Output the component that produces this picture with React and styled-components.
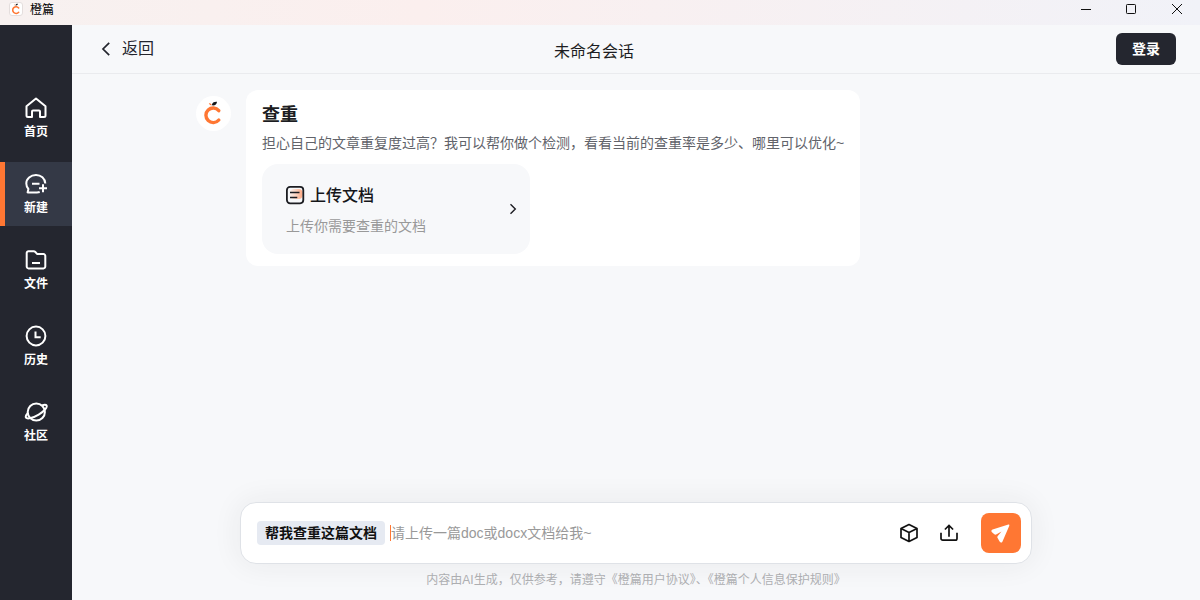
import React, { useState } from "react";
import styled, { createGlobalStyle } from "styled-components";

const menus = [
  { key: "home", label: "首页", icon: <HomeIcon /> },
  { key: "new", label: "新建", icon: <NewChatIcon /> },
  { key: "file", label: "文件", icon: <FolderIcon /> },
  { key: "history", label: "历史", icon: <HistoryIcon /> },
  { key: "community", label: "社区", icon: <PlanetIcon /> },
];

const App = () => {
  const [active, setActive] = useState("new");

  return (
    <>
      <GlobalStyle />
      <Window>
        <TitleBar>
          <AppIcon>
            <Logo size={12} />
          </AppIcon>
          <AppName>橙篇</AppName>
          <WindowButtons>
            <svg width="12" height="12" viewBox="0 0 12 12">
              <path d="M1 6.5h10" stroke="#111" />
            </svg>
            <svg width="12" height="12" viewBox="0 0 12 12" fill="none">
              <rect x="1.5" y="1.5" width="9" height="9" rx="0.8" stroke="#111" />
            </svg>
            <svg width="12" height="12" viewBox="0 0 12 12">
              <path d="M1 1l10 10M11 1L1 11" stroke="#111" />
            </svg>
          </WindowButtons>
        </TitleBar>

        <Body>
          <SideBar>
            {menus.map((m) => (
              <MenuItem key={m.key} $active={m.key === active} onClick={() => setActive(m.key)}>
                {m.icon}
                <MenuLabel>{m.label}</MenuLabel>
              </MenuItem>
            ))}
          </SideBar>

          <Main>
            <Header>
              <BackButton>
                <svg width="12" height="16" viewBox="0 0 12 16" fill="none">
                  <path d="M9.2 1.8L3 8l6.2 6.2" stroke="#23252d" strokeWidth="1.7" />
                </svg>
                返回
              </BackButton>
              <Title>未命名会话</Title>
              <LoginButton>登录</LoginButton>
            </Header>

            <Chat>
              <Avatar>
                <Logo size={26} />
              </Avatar>
              <Message>
                <MessageTitle>查重</MessageTitle>
                <MessageText>
                  担心自己的文章重复度过高？我可以帮你做个检测，看看当前的查重率是多少、哪里可以优化~
                </MessageText>
                <UploadCard>
                  <div>
                    <UploadTitle>
                      <DocIcon />
                      上传文档
                    </UploadTitle>
                    <UploadText>上传你需要查重的文档</UploadText>
                  </div>
                  <svg width="8" height="12" viewBox="0 0 8 12" fill="none">
                    <path d="M1.5 1.2L6.3 6l-4.8 4.8" stroke="#1c1d22" strokeWidth="1.4" />
                  </svg>
                </UploadCard>
              </Message>
            </Chat>

            <InputBox>
              <Tag>帮我查重这篇文档</Tag>
              <Caret />
              <Placeholder>请上传一篇doc或docx文档给我~</Placeholder>
              <Tools>
                <CubeIcon />
                <ShareIcon />
              </Tools>
              <SendButton>
                <svg width="24" height="24" viewBox="0 0 24 24">
                  <path
                    d="M19.4 3.6L3.600 8.600c-1.400.5-1.600 1.800-.6 2.700l2.300 1.900c.7.6 1.500.6 2.300.1l4.900-2.900-3.700 4.500c-.6.7-.6 1.300-.2 2l2 3.700c.8 1.400 2.300 1.300 2.900-.2l6.700-15.500c.4-.9 0-1.500-.8-1.300z"
                    fill="#fff"
                  />
                </svg>
              </SendButton>
            </InputBox>
            <Notice>内容由AI生成，仅供参考，请遵守《橙篇用户协议》、《橙篇个人信息保护规则》</Notice>
          </Main>
        </Body>
      </Window>
    </>
  );
};

export default App;

function Logo({ size }) {
  return (
    <svg width={size} height={size} viewBox="0 0 26 26" fill="none">
      <path d="M18.8 10.600A7.300 7.300 0 1 0 18.8 20" stroke="#ff7733" strokeWidth="3.400" strokeLinecap="round" />
      <path d="M11.800 5.300c.2-2.600 2.400-3.700 5.200-3.500-.2 2.600-2.200 4.100-5.200 3.500z" fill="#15161a" />
      <path d="M8.800 3.300c1.500-.4 2.500.5 3 2-1.500.1-2.500-.6-3-2z" fill="#ff7733" />
    </svg>
  );
}

function HomeIcon() {
  return (
    <svg width="24" height="24" viewBox="0 0 24 24" fill="none" stroke="#fff" strokeWidth="2" strokeLinejoin="round">
      <path d="M2.500 10.300L12 2.500l9.500 7.800v9.200a1.500 1.500 0 0 1-1.500 1.500h-4v-5.500a1 1 0 0 0-1-1H9a1 1 0 0 0-1 1V21H4a1.500 1.500 0 0 1-1.500-1.500z" />
    </svg>
  );
}

function NewChatIcon() {
  return (
    <svg width="24" height="24" viewBox="0 0 24 24" fill="none" stroke="#fff" strokeWidth="2">
      <path d="M21.300 11.500C21 6.300 17 3 12 3 6.600 3 2.300 6.700 2.300 11.500c0 2.300 1 4.200 2.100 5.500L3.600 20.400h9.400c1 0 1.800-.1 2.700-.4" strokeLinejoin="round" />
      <path d="M8 11.700h7.500M19 12.300v7.900M15 16.200h8" />
    </svg>
  );
}

function FolderIcon() {
  return (
    <svg width="24" height="24" viewBox="0 0 24 24" fill="none" stroke="#fff" strokeWidth="2" strokeLinejoin="round">
      <path d="M4.500 3.200h5.200c.6 0 1 .2 1.400.6l2.200 2.300h6.200a1.800 1.800 0 0 1 1.800 1.800v10.700a1.800 1.800 0 0 1-1.800 1.800H4.500a1.800 1.800 0 0 1-1.800-1.800V5a1.800 1.800 0 0 1 1.800-1.800z" />
      <path d="M8 15h8" />
    </svg>
  );
}

function HistoryIcon() {
  return (
    <svg width="24" height="24" viewBox="0 0 24 24" fill="none" stroke="#fff" strokeWidth="2">
      <circle cx="12" cy="12" r="9.400" />
      <path d="M11.500 7.500v5.700h5.200" />
    </svg>
  );
}

function PlanetIcon() {
  return (
    <svg width="24" height="24" viewBox="0 0 24 24" fill="none" stroke="#fff" strokeWidth="2">
      <circle cx="12.300" cy="12" r="8.600" />
      <path d="M17.800 5.400c2.700-.8 4.300-.7 4.800.2 1 1.700-2.400 5.700-7.900 9S3.200 19.400 2 17.700c-.7-1.100.2-3 2-5.100" />
    </svg>
  );
}

function DocIcon() {
  return (
    <svg width="20" height="20" viewBox="0 0 20 20" fill="none">
      <defs>
        <linearGradient id="docGlow" x1="4" y1="8" x2="17" y2="8" gradientUnits="userSpaceOnUse">
          <stop stopColor="#ffd9c8" stopOpacity="0.3" />
          <stop offset="1" stopColor="#ffab86" />
        </linearGradient>
      </defs>
      <rect x="5" y="4" width="12.500" height="10" rx="4" fill="url(#docGlow)" />
      <rect x="1.900" y="1.900" width="16.400" height="16.400" rx="3.200" stroke="#1c1d22" strokeWidth="1.800" />
      <path d="M5 7.500h9.500M5 12.500h7.300" stroke="#1c1d22" strokeWidth="1.600" />
    </svg>
  );
}

function CubeIcon() {
  return (
    <svg width="20" height="20" viewBox="0 0 20 20" fill="none" stroke="#111" strokeWidth="1.700" strokeLinejoin="round">
      <path d="M10 1.600l8 4v8.800l-8 4-8-4V5.600zM2 5.600l8 3.800 8-3.800M10 9.400v9" />
    </svg>
  );
}

function ShareIcon() {
  return (
    <svg width="20" height="20" viewBox="0 0 20 20" fill="none" stroke="#111" strokeWidth="1.700">
      <path d="M2 9.800v5.700a1.700 1.700 0 0 0 1.700 1.700h12.600a1.700 1.700 0 0 0 1.700-1.700V9.800M10 13.700V2.800M5.900 6.500L10 2.400l4.100 4.100" />
    </svg>
  );
}

const GlobalStyle = createGlobalStyle`
  * {
    box-sizing: border-box;
  }
  body {
    margin: 0;
    font-family: "Liberation Sans", "Noto Sans CJK SC", sans-serif;
  }
  button {
    font-family: inherit;
    border: none;
    padding: 0;
    cursor: pointer;
  }
  svg {
    display: block;
    flex-shrink: 0;
  }
`;

const Window = styled.div`
  display: flex;
  flex-direction: column;
  width: 1200px;
  height: 600px;
  overflow: hidden;
  background: #f7f8fa;
`;

const TitleBar = styled.div`
  display: flex;
  align-items: center;
  height: 25px;
  padding: 0 17px 7px 9px;
  background: linear-gradient(90deg, #f7f1f0 0%, #fbefee 35%, #f1f2f8 100%);
`;

const AppIcon = styled.div`
  display: flex;
  align-items: center;
  justify-content: center;
  width: 14px;
  height: 14px;
  border: 1px solid #e4dedd;
  border-radius: 3px;
  background: #fff;
`;

const AppName = styled.span`
  margin-left: 7px;
  padding-top: 1px;
  font-size: 12px;
  line-height: 18px;
  color: #000;
`;

const WindowButtons = styled.div`
  display: flex;
  gap: 33px;
  margin-left: auto;

  svg:last-child {
    margin-left: 1px;
  }
`;

const Body = styled.div`
  display: flex;
  flex: 1;
  min-height: 0;
`;

const SideBar = styled.nav`
  display: flex;
  flex-direction: column;
  gap: 12px;
  width: 72px;
  padding-top: 61px;
  background: #24262f;
`;

const MenuItem = styled.div`
  display: flex;
  flex-direction: column;
  align-items: center;
  height: 64px;
  padding: 10px 5px 0 0;
  border-left: 5px solid ${(props) => (props.$active ? "#ff7733" : "transparent")};
  background: ${(props) => (props.$active ? "#343946" : "transparent")};
  cursor: pointer;
`;

const MenuLabel = styled.span`
  margin-top: 3px;
  font-size: 12px;
  font-weight: 700;
  line-height: 18px;
  color: #fff;
`;

const Main = styled.main`
  display: flex;
  flex-direction: column;
  flex: 1;
`;

const Header = styled.header`
  display: grid;
  grid-template-columns: 1fr auto 1fr;
  align-items: center;
  height: 49px;
  padding: 0 24px 0 28px;
  border-bottom: 1px solid #eaebee;
`;

const BackButton = styled.div`
  display: flex;
  align-items: center;
  gap: 10px;
  font-size: 16px;
  line-height: 24px;
  color: #23252d;
  cursor: pointer;
`;

const Title = styled.h1`
  margin: 0;
  padding: 5px 88px 0 0;
  font-size: 16px;
  font-weight: 400;
  line-height: 24px;
  color: #1c1d22;
`;

const LoginButton = styled.button`
  justify-self: end;
  width: 60px;
  height: 32px;
  padding-bottom: 2px;
  border-radius: 6px;
  font-size: 14px;
  font-weight: 700;
  color: #fff;
  background: #24262f;
`;

const Chat = styled.section`
  display: flex;
  align-items: flex-start;
  gap: 15px;
  flex: 1;
  padding: 16px 0 0 124px;
`;

const Avatar = styled.div`
  display: flex;
  align-items: center;
  justify-content: center;
  width: 35px;
  height: 35px;
  margin-top: 6px;
  padding: 0 1px 2px 0;
  border-radius: 50%;
  background: #fff;
`;

const Message = styled.div`
  width: 614px;
  height: 176px;
  padding: 12px 16px 12px;
  border-radius: 12px;
  background: #fff;
`;

const MessageTitle = styled.h2`
  margin: 0;
  font-size: 18px;
  font-weight: 700;
  line-height: 27px;
  color: #1c1d22;
`;

const MessageText = styled.p`
  margin: 3px 0 10px;
  font-size: 14px;
  line-height: 22px;
  color: #61636a;
  white-space: nowrap;
`;

const UploadCard = styled.div`
  display: flex;
  align-items: center;
  justify-content: space-between;
  width: 268px;
  height: 90px;
  padding: 0 13px 0 24px;
  border-radius: 16px;
  background: #f7f8fa;
  cursor: pointer;
`;

const UploadTitle = styled.div`
  display: flex;
  align-items: center;
  gap: 5px;
  margin: 2px 0 0 -1px;
  font-size: 16px;
  font-weight: 500;
  line-height: 24px;
  color: #15161a;

  svg {
    margin-top: -2px;
  }
`;

const UploadText = styled.p`
  margin: 7px 0 0;
  font-size: 14px;
  line-height: 22px;
  color: #999;
`;

const InputBox = styled.div`
  display: flex;
  align-items: center;
  align-self: center;
  width: 792px;
  height: 62px;
  padding: 0 10px 0 16px;
  border: 1px solid #dfe2e7;
  border-radius: 16px;
  background: #fff;
  box-shadow: 0 0 30px rgba(36, 38, 47, 0.07);
`;

const Tag = styled.span`
  height: 24px;
  padding: 0 8px;
  border-radius: 4px;
  font-size: 14px;
  font-weight: 700;
  line-height: 24px;
  color: #111;
  background: #e6eaf2;
`;

const Caret = styled.span`
  width: 1px;
  height: 16px;
  margin-left: 5px;
  background: #ff7733;
`;

const Placeholder = styled.span`
  font-size: 14px;
  line-height: 22px;
  color: #999;
`;

const Tools = styled.div`
  display: flex;
  gap: 20px;
  margin: 0 22px 0 auto;
`;

const SendButton = styled.button`
  display: flex;
  align-items: center;
  justify-content: center;
  width: 40px;
  height: 40px;
  border-radius: 8px;
  background: #ff7733;
`;

const Notice = styled.p`
  margin: 8px 0 11px;
  font-size: 12px;
  line-height: 17px;
  text-align: center;
  color: #adaeb1;
`;
